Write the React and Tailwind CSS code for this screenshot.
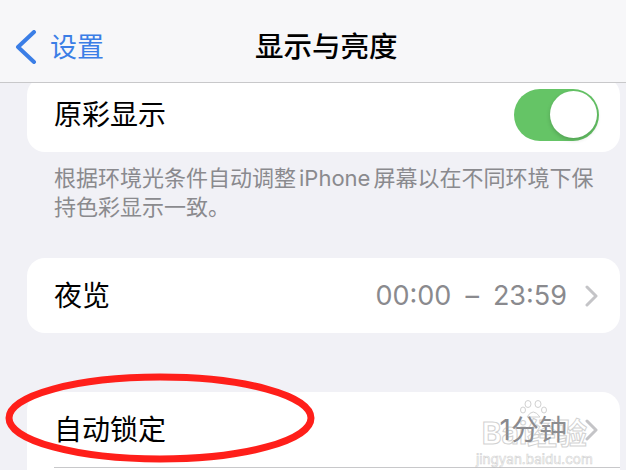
import React from "react";

const font = { fontFamily: 'Inter, "Noto Sans CJK SC", sans-serif' };

// Disclosure chevron used in the right side of rows
const Chevron = () => (
  <svg width="14" height="22" viewBox="0 0 14 22" className="shrink-0">
    <polyline points="2,2 11,11 2,20" fill="none" stroke="#c4c4c7" strokeWidth="3" strokeLinecap="round" strokeLinejoin="round" />
  </svg>
);

const Row = ({ label, value, children, className = "" }) => (
  <div className={`flex h-[75px] items-center justify-between pl-[27px] pr-[21px] ${className}`}>
    <span className="text-[28px] leading-none text-black">{label}</span>
    {children ?? (
      <div className="flex items-center gap-[18px]">
        <span className="text-[27px] leading-none text-[#8a8a8e]">{value}</span>
        <Chevron />
      </div>
    )}
  </div>
);

export default function App() {
  return (
    <div className="relative h-[470px] w-[626px] overflow-hidden bg-[#f1f1f6]" style={font}>
      {/* Nav bar */}
      <div className="relative z-10 flex h-[83px] items-center border-b border-[#c8c8ca] bg-[#f7f7f9] pt-[12px]">
        <div className="flex items-center pl-[15px] text-[#3b7ee6]">
          <svg width="22" height="34" viewBox="0 0 22 34">
            <polyline points="19,2 3,17 19,32" fill="none" stroke="#3b7ee6" strokeWidth="4" strokeLinecap="round" strokeLinejoin="round" />
          </svg>
          <span className="ml-[13px] text-[27px] leading-none">设置</span>
        </div>
        <span className="absolute left-[255px] top-[33px] text-[28.5px] font-medium leading-none text-black">
          显示与亮度
        </span>
      </div>

      {/* Content */}
      <div className="px-[27px] pr-[6px]">
        <div className="-mt-[6px] rounded-[18px] bg-white">
          <Row label="原彩显示">
            <div className="flex h-[52px] w-[85px] items-center justify-end rounded-full bg-[#65c466] pr-[2px]">
              <div className="h-[47px] w-[47px] rounded-full bg-white shadow-[0_2px_4px_rgba(0,0,0,0.18)]" />
            </div>
          </Row>
        </div>

        <p className="mt-[12px] pl-[27px] pr-[20px] text-[22px] leading-[29px] text-[#8a8a8e]">
          根据环境光条件自动调整<span className="mx-[3px]">iPhone</span>屏幕以在不同环境下保持色彩显示一致。
        </p>

        <div className="mt-[36px] rounded-[18px] bg-white">
          <Row label="夜览" value={<>00:00<span className="mx-[14px]">–</span>23:59</>} />
        </div>

        <div className="mt-[59px] rounded-t-[18px] bg-white">
          <Row label="自动锁定" value={<span className="text-[28px]">1分钟</span>} />
          <div className="ml-[27px] h-px bg-[#c8c8ca]" />
          <div className="h-[20px]" />
        </div>
      </div>

      {/* Baidu watermark */}
      <div className="pointer-events-none absolute left-[476px] top-[400px] flex flex-col items-center opacity-45">
        <svg width="30" height="18" viewBox="0 0 30 18" fill="none" stroke="#9a9a9a" strokeWidth="1">
          <ellipse cx="9" cy="4" rx="3" ry="3.5" />
          <ellipse cx="19" cy="4" rx="3" ry="3.5" />
          <ellipse cx="4" cy="10" rx="2.5" ry="3" />
          <ellipse cx="25" cy="10" rx="2.5" ry="3" />
          <path d="M8 17 Q14 7 21 17 Z" />
        </svg>
        <span className="text-[30px] font-bold leading-none text-transparent [-webkit-text-stroke:1px_#9a9a9a]">Bai经验</span>
        <span className="mt-[5px] text-[13.5px] leading-none text-transparent [-webkit-text-stroke:0.6px_#9a9a9a]">jingyan.baidu.com</span>
      </div>

      {/* Red annotation ellipse */}
      <svg className="pointer-events-none absolute left-0 top-0" width="626" height="470">
        <ellipse cx="160" cy="418" rx="151" ry="41" fill="none" stroke="#ff1f1a" strokeWidth="7" />
      </svg>
    </div>
  );
}
